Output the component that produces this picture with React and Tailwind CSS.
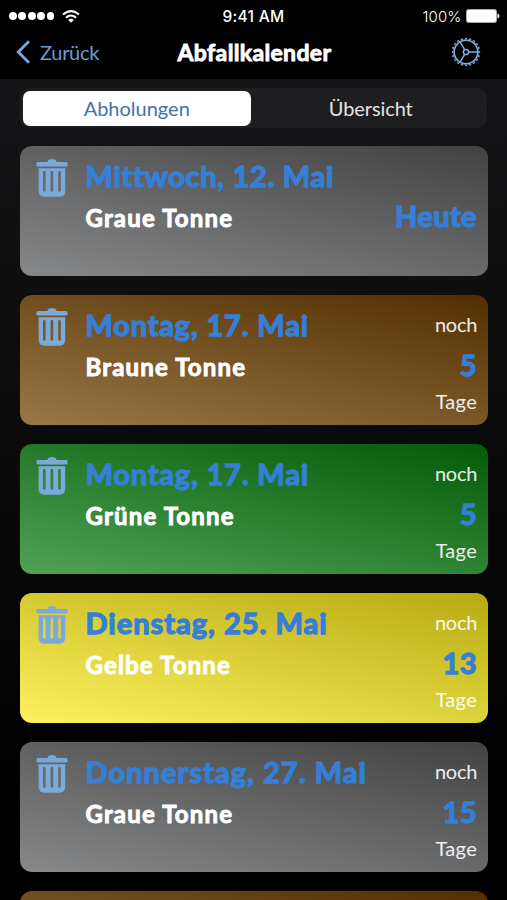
const pickups = [
  { date: "Mittwoch, 12. Mai", name: "Graue Tonne", today: true, spacing: "tracking-[0.7px]", fill: "bg-[linear-gradient(12deg,#878889,#424243)]" },
  { date: "Montag, 17. Mai", name: "Braune Tonne", days: 5, spacing: "tracking-[0.82px]", fill: "bg-[linear-gradient(12deg,#997747,#532f00)]" },
  { date: "Montag, 17. Mai", name: "Grüne Tonne", days: 5, spacing: "tracking-[0.82px]", fill: "bg-[linear-gradient(12deg,#50a355,#045a09)]" },
  { date: "Dienstag, 25. Mai", name: "Gelbe Tonne", days: 13, spacing: "tracking-[1px]", fill: "bg-[linear-gradient(12deg,#fdf25e,#b7aa12)]" },
  { date: "Donnerstag, 27. Mai", name: "Graue Tonne", days: 15, spacing: "tracking-[1.05px]", fill: "bg-[linear-gradient(12deg,#878889,#424243)]" },
];

function TrashIcon() {
  return (
    <svg className="mt-[12.5px] ml-[15.5px] h-[38px] w-8 shrink-0" viewBox="0 0 32 38" fill="#7aaad9">
      <path d="M2 2.9H11.3Q12 .3 14 .3H18Q20 .3 20.7 2.9H30Q31.7 2.9 31.7 5.2Q31.7 7.4 30 7.4H2Q.3 7.4 .3 5.2Q.3 2.9 2 2.9Z" />
      <path
        fillRule="evenodd"
        d="M2.6 9.2H29.2V31.8Q29.2 37.7 23.4 37.7H8.4Q2.6 37.7 2.6 31.8ZM7 13.4V31.5Q7 32.8 8.3 32.8T9.6 31.5V13.4Q9.6 12.1 8.3 12.1T7 13.4ZM14.6 13.4V31.5Q14.6 32.8 15.9 32.8T17.2 31.5V13.4Q17.2 12.1 15.9 12.1T14.6 13.4ZM22.2 13.4V31.5Q22.2 32.8 23.5 32.8T24.8 31.5V13.4Q24.8 12.1 23.5 12.1T22.2 13.4Z"
      />
    </svg>
  );
}

function GearIcon() {
  const teeth = Array.from({ length: 20 }, (_, i) => i * 18);
  return (
    <svg className="size-[30px]" viewBox="-15 -15 30 30" fill="none" stroke="#84b0e2">
      <circle r="11.8" strokeWidth="1.5" />
      {teeth.map((a) => (
        <path key={a} d="M-.9 -12.3L-.4 -13.8H.4L.9 -12.3" strokeWidth="1" transform={`rotate(${a})`} />
      ))}
      <circle r="2.6" strokeWidth="1.5" />
      {[90, 210, 330].map((a) => (
        <path key={a} d="M0 -2.8V-11.6" strokeWidth="1.5" transform={`rotate(${a})`} />
      ))}
    </svg>
  );
}

function StatusBar() {
  return (
    <div className="flex h-8 items-center justify-between pr-[7px] pl-[9px] font-[Inter]">
      <div className="flex w-[200px] items-center gap-[1.6px]">
        {[0, 1, 2, 3, 4].map((i) => (
          <span key={i} className="size-[7.8px] rounded-full bg-white" />
        ))}
        <svg className="ml-[6px] h-[13px] w-[18px]" viewBox="0 0 18 13" fill="none" stroke="#fff" strokeWidth="2">
          <path d="M1 4.6Q9 -2.4 17 4.6" />
          <path d="M3.9 7.7Q9 3.3 14.1 7.7" />
          <path d="M9 12.8L6.2 10Q9 7.7 11.8 10Z" fill="#fff" stroke="none" />
        </svg>
      </div>
      <div className="mt-[2px] mr-[2px] text-[15.5px] leading-5 font-medium tracking-[0.3px]">9:41 AM</div>
      <div className="flex w-[200px] items-center justify-end">
        <span className="mt-[2px] mr-[5px] text-[15px] leading-5 font-light tracking-[0.1px]">100%</span>
        <svg className="h-[14px] w-[33.5px]" viewBox="0 0 33.5 14">
          <rect x=".5" y=".5" width="30" height="13" rx="2" fill="#fff" stroke="#aaa" />
          <path d="M31.5 4.6Q33.4 5.2 33.4 7T31.5 9.4Z" fill="#fff" />
        </svg>
      </div>
    </div>
  );
}

function Card({ date, name, today, days, spacing, fill }) {
  return (
    <article className={`flex h-[129.5px] shrink-0 overflow-hidden rounded-[12px] ${fill}`}>
      <TrashIcon />
      <div className="ml-[18px] flex-1 pt-[11.2px] font-bold whitespace-nowrap">
        <h2 className={`text-[29px] leading-9 text-[#357fd6] [-webkit-text-stroke:1.3px_#357fd6] ${spacing}`}>{date}</h2>
        <p className="mt-[6.6px] text-[24px] leading-9 tracking-[1.16px] [-webkit-text-stroke:0.9px_#fff]">{name}</p>
      </div>
      <div className="flex flex-col items-end pt-[14.2px] pr-[10.5px] text-[20px] leading-7 text-white/90">
        <span className="h-7 tracking-[-0.3px]">{today ? "" : "noch"}</span>
        <span className="mt-[7px] text-[29px] leading-10 font-bold tracking-[0.4px] text-[#357fd6] [-webkit-text-stroke:1.3px_#357fd6]">
          {today ? "Heute" : days}
        </span>
        <span className="mt-[2px] h-7 tracking-[0.3px]">{today ? "" : "Tage"}</span>
      </div>
    </article>
  );
}

export default function App() {
  return (
    <main className="flex h-[900px] w-[507px] flex-col overflow-hidden bg-[linear-gradient(#161618,#131315_15%,#000_90%)] font-[Lato,sans-serif] text-white">
      <header className="h-[79px] shrink-0 bg-black">
        <StatusBar />
        <nav className="flex h-10 items-center justify-between pr-[26px] pl-4">
          <div className="flex w-[110px] items-center text-[20px] leading-7 tracking-[-0.3px] text-[#6f9bcf]">
            <svg className="mr-[10px] h-6 w-[14px]" viewBox="0 0 14 24" fill="none" stroke="#78a8e0" strokeWidth="2.8">
              <path d="M13 1.3L2.2 12L13 22.7" />
            </svg>
            <span>Zurück</span>
          </div>
          <h1 className="ml-[2px] text-[23px] leading-7 font-bold tracking-[0.35px] [-webkit-text-stroke:0.9px_#fff]">Abfallkalender</h1>
          <div className="flex w-[100px] justify-end">
            <GearIcon />
          </div>
        </nav>
      </header>
      <div className="mx-5 mt-[9px] flex h-10 shrink-0 rounded-[10px] bg-[#1e1e20] p-[3px] text-center text-[20px] leading-[34px]">
        <div className="h-[34.5px] w-[227.5px] rounded-[7px] bg-white text-[#3f73ad]">Abholungen</div>
        <div className="flex-1 pl-[7px] tracking-[-0.1px] text-[#e3e3e3]">Übersicht</div>
      </div>
      <section className="mt-[18.4px] mr-[19.5px] ml-5 flex flex-col gap-[19.5px]">
        {pickups.map((p, i) => (
          <Card key={i} {...p} />
        ))}
        <article className="h-[129.5px] shrink-0 rounded-[12px] bg-[linear-gradient(12deg,#997747,#532f00)]" />
      </section>
    </main>
  );
}
